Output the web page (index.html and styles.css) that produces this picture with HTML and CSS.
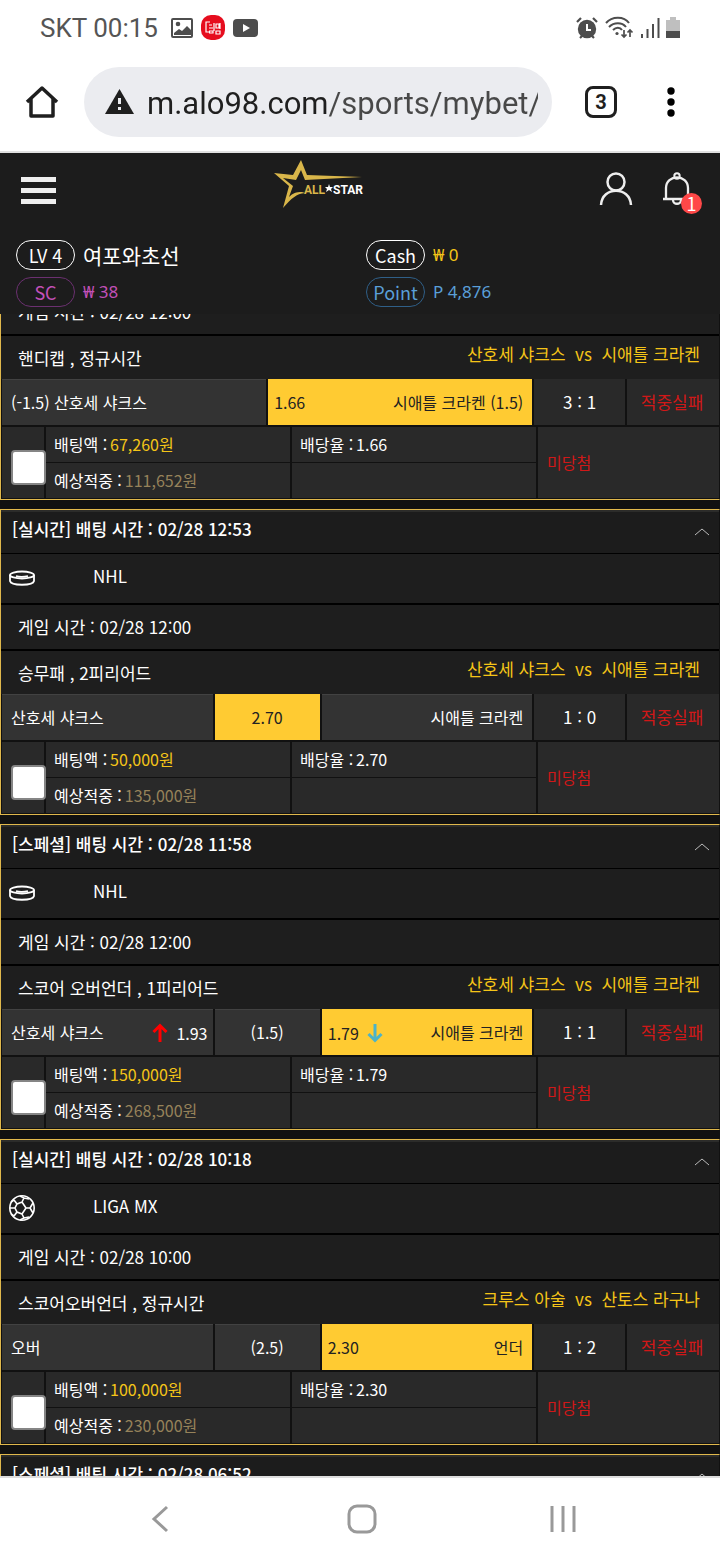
FILE: index.html
```html
<!DOCTYPE html>
<html lang="ko">
<head>
  <meta charset="UTF-8">
  <meta name="viewport" content="width=device-width, initial-scale=1.0">
  <title>ALL STAR</title>
  <link rel="stylesheet" href="styles.css">
</head>
<body>
  <div class="status-bar">
    <span class="carrier">SKT 00:15</span>
    <svg width="22" height="20" viewBox="0 0 22 20"><rect x="1" y="1" width="20" height="18" rx="1" fill="none" stroke="#4d4d4d" stroke-width="2"/><circle cx="7" cy="6" r="2.3" fill="#4d4d4d"/><path d="M3 15l5-4 3 2 5-5 4 4v5H3z" fill="#4d4d4d"/></svg>
    <svg width="24" height="26" viewBox="0 0 24 26"><rect width="24" height="25" rx="10" fill="#e60d1e"/><path d="M9 7H5v10h4M8 10h3M8 13h4M8 16h4v2H8M13 8v8M15 9v4h3V9zM19 8v6M15 16h4v3h-4z" fill="none" stroke="#fff" stroke-width="1.2"/></svg>
    <svg width="26" height="20" viewBox="0 0 26 20"><rect y="1" width="25" height="18" rx="4" fill="#4d4d4d"/><path d="M10 6v8l7-4z" fill="#fff"/></svg>
    <div class="status-right">
      <svg width="24" height="24" viewBox="0 0 24 24"><circle cx="12" cy="13" r="9.2" fill="#4d4d4d"/><path d="M2 6l4-4M22 6l-4-4M5 22l3-3M19 22l-3-3" stroke="#4d4d4d" stroke-width="2.2"/><path d="M12 8v6h4" fill="none" stroke="#fff" stroke-width="2"/></svg>
      <svg width="29" height="24" viewBox="0 0 29 24"><path d="M1 7c6-7 18-7 23 0M4 11c5-5 13-5 17 0M8 14c3-3 7-3 9 0" fill="none" stroke="#4d4d4d" stroke-width="2"/><circle cx="12" cy="17.500" r="1.600" fill="#4d4d4d"/><path d="M19 14v7M16.500 18.500L19 21l2.500-2.500M25 21v-7M22.500 16.500L25 14l2.500 2.500" fill="none" stroke="#4d4d4d" stroke-width="1.700"/></svg>
      <svg width="20" height="22" viewBox="0 0 20 22"><path d="M2 17v4M7.500 12v9M13 7v14M18.500 1v20" stroke="#4d4d4d" stroke-width="2"/></svg>
      <svg width="14" height="22" viewBox="0 0 14 22"><path d="M4 0h6v3h4v12H0V3h4z" fill="#bfbfbf"/><path d="M0 14h14v7H0z" fill="#4d4d4d"/></svg>
    </div>
  </div>

  <div class="browser-bar">
    <button class="icon-btn" aria-label="홈"><svg width="34" height="34" viewBox="0 0 34 34"><path d="M2 17L17 3l15 14M6 14v17h22V14" fill="none" stroke="#1f1f1f" stroke-width="3.500" stroke-linejoin="round"/></svg></button>
    <div class="address">
      <svg width="29" height="26" viewBox="0 0 29 26"><path d="M14.500 0L29 25H0z" fill="#1f1f1f"/><path d="M14.500 9v6M14.500 18v3" stroke="#ebecf0" stroke-width="3"/></svg>
      <input class="url" type="text" value="m.alo98.com/sports/mybet/" aria-label="주소">
    </div>
    <button class="tab-count">3</button>
    <button class="icon-btn" aria-label="메뉴"><svg width="8" height="30" viewBox="0 0 8 30"><circle cx="4" cy="4" r="3.700"/><circle cx="4" cy="15" r="3.700"/><circle cx="4" cy="26" r="3.700"/></svg></button>
  </div>

  <header class="header">
    <div class="top">
      <button class="menu-btn" aria-label="전체 메뉴"><i></i><i></i><i></i></button>
      <a class="logo" href="#">
        <svg width="90" height="50" viewBox="0 0 90 50" role="img" aria-label="ALL STAR">
          <path fill-rule="evenodd" d="M0 13l19 2 8-15 6 15 55 2-57 3-4-10-5 10-13-2 10 8-4 11c4-4 7-5 13-5l3 1c-9 1-13 5-22 15l6-22z" fill="#d9b64a"/>
          <text class="logo-all" x="30" y="34">ALL</text>
          <path d="M55 24l1 3h3l-2 2 1 3-3-2-3 2 1-3-2-2h3z" fill="#fff"/>
          <text class="logo-star" x="59" y="34">STAR</text>
        </svg>
      </a>
      <div class="top-right">
        <button class="icon-btn" aria-label="내 정보"><svg width="34" height="34" viewBox="0 0 34 34"><circle cx="17" cy="10" r="8.500" fill="none" stroke="#eee" stroke-width="2.500"/><path d="M2 33c1-19 29-19 30 0" fill="none" stroke="#eee" stroke-width="2.500"/></svg></button>
        <button class="icon-btn bell" aria-label="알림"><svg width="28" height="34" viewBox="0 0 28 34"><path d="M0 27h28M3 27V16c0-14 22-14 22 0v11M10 28c0 5 8 5 8 0" fill="none" stroke="#eee" stroke-width="2.300"/><circle cx="14" cy="4" r="2.700" fill="none" stroke="#eee" stroke-width="2"/></svg><span class="count">1</span></button>
      </div>
    </div>
    <div class="member">
      <div class="info"><span class="badge">LV 4</span><span class="name">여포와초선</span></div>
      <div class="info cash"><span class="badge">Cash</span><span class="money">₩ 0</span></div>
      <div class="info sc"><span class="badge">SC</span><span class="money">₩ 38</span></div>
      <div class="info point"><span class="badge">Point</span><span class="money">P 4,876</span></div>
    </div>
  </header>

  <main class="content">
    <div class="bet-list">
      <section class="bet">
        <div class="time">게임 시간 : 02/28 12:00</div>
        <div class="type"><span>핸디캡 , 정규시간</span><span class="versus">산호세 샤크스&nbsp; vs &nbsp;시애틀 크라켄</span></div>
        <div class="odds">
          <div class="pick two">
            <div class="team"><span>(-1.5) 산호세 샤크스</span></div>
            <div class="team on"><span>1.66</span><span class="away">시애틀 크라켄 (1.5)</span></div>
          </div>
          <div class="score">3 : 1</div>
          <div class="result">적중실패</div>
        </div>
        <div class="summary">
          <div class="check"><input type="checkbox" aria-label="선택"></div>
          <dl><div><dt>배팅액 :</dt><dd class="stake">67,260원</dd></div><div><dt>예상적중 :</dt><dd class="expect">111,652원</dd></div></dl>
          <dl><div><dt>배당율 :</dt><dd>1.66</dd></div><div></div></dl>
          <div class="state">미당첨</div>
        </div>
      </section>

      <section class="bet">
        <h2 class="title">[실시간] 배팅 시간 : 02/28 12:53<button class="fold" aria-label="접기"><svg width="16" height="10" viewBox="0 0 16 10"><path d="M1 8l7-6 7 6" fill="none" stroke="#bbb"/></svg></button></h2>
        <div class="league"><svg width="28" height="28" viewBox="0 0 28 28" fill="none" stroke="#fff" stroke-width="1.800"><ellipse cx="14" cy="11" rx="12" ry="3.500"/><path d="M2 11v6c1 5 23 5 24 0v-6M8 12c3 1 8 1 12 0"/></svg><span>NHL</span></div>
        <div class="time">게임 시간 : 02/28 12:00</div>
        <div class="type"><span>승무패 , 2피리어드</span><span class="versus">산호세 샤크스&nbsp; vs &nbsp;시애틀 크라켄</span></div>
        <div class="odds">
          <div class="pick">
            <div class="team"><span>산호세 샤크스</span></div>
            <div class="line on">2.70</div>
            <div class="team"><span class="away">시애틀 크라켄</span></div>
          </div>
          <div class="score">1 : 0</div>
          <div class="result">적중실패</div>
        </div>
        <div class="summary">
          <div class="check"><input type="checkbox" aria-label="선택"></div>
          <dl><div><dt>배팅액 :</dt><dd class="stake">50,000원</dd></div><div><dt>예상적중 :</dt><dd class="expect">135,000원</dd></div></dl>
          <dl><div><dt>배당율 :</dt><dd>2.70</dd></div><div></div></dl>
          <div class="state">미당첨</div>
        </div>
      </section>

      <section class="bet">
        <h2 class="title">[스페셜] 배팅 시간 : 02/28 11:58<button class="fold" aria-label="접기"><svg width="16" height="10" viewBox="0 0 16 10"><path d="M1 8l7-6 7 6" fill="none" stroke="#bbb"/></svg></button></h2>
        <div class="league"><svg width="28" height="28" viewBox="0 0 28 28" fill="none" stroke="#fff" stroke-width="1.800"><ellipse cx="14" cy="11" rx="12" ry="3.500"/><path d="M2 11v6c1 5 23 5 24 0v-6M8 12c3 1 8 1 12 0"/></svg><span>NHL</span></div>
        <div class="time">게임 시간 : 02/28 12:00</div>
        <div class="type"><span>스코어 오버언더 , 1피리어드</span><span class="versus">산호세 샤크스&nbsp; vs &nbsp;시애틀 크라켄</span></div>
        <div class="odds">
          <div class="pick">
            <div class="team"><span>산호세 샤크스</span><span class="rate"><svg width="16" height="20" viewBox="0 0 16 20"><path d="M8 19V3M1.500 9L8 2.500 14.500 9" fill="none" stroke="#f00" stroke-width="3"/></svg>1.93</span></div>
            <div class="line">(1.5)</div>
            <div class="team on"><span class="rate">1.79<svg width="16" height="20" viewBox="0 0 16 20"><path d="M8 1v16M1.500 11L8 17.500l6.500-6.500" fill="none" stroke="#4db3c8" stroke-width="3"/></svg></span><span class="away">시애틀 크라켄</span></div>
          </div>
          <div class="score">1 : 1</div>
          <div class="result">적중실패</div>
        </div>
        <div class="summary">
          <div class="check"><input type="checkbox" aria-label="선택"></div>
          <dl><div><dt>배팅액 :</dt><dd class="stake">150,000원</dd></div><div><dt>예상적중 :</dt><dd class="expect">268,500원</dd></div></dl>
          <dl><div><dt>배당율 :</dt><dd>1.79</dd></div><div></div></dl>
          <div class="state">미당첨</div>
        </div>
      </section>

      <section class="bet">
        <h2 class="title">[실시간] 배팅 시간 : 02/28 10:18<button class="fold" aria-label="접기"><svg width="16" height="10" viewBox="0 0 16 10"><path d="M1 8l7-6 7 6" fill="none" stroke="#bbb"/></svg></button></h2>
        <div class="league"><svg width="28" height="28" viewBox="0 0 28 28" fill="none" stroke="#fff" stroke-width="1.600"><circle cx="14" cy="14" r="12.200"/><path d="M9 10l5-2 4 6-4 6-5-2-2-4zM18 14h4M14 8l2-4M14 20l2 4M7 14H2M9 10L6 6M9 18l-3 4M16 4l-4-2M16 4l5 1M16 24l-4 2M16 24l5-1M22 14l3-5M22 14l3 5M6 6l-3 2M6 22l-3-2"/></svg><span>LIGA MX</span></div>
        <div class="time">게임 시간 : 02/28 10:00</div>
        <div class="type"><span>스코어오버언더 , 정규시간</span><span class="versus">크루스 아술&nbsp; vs &nbsp;산토스 라구나</span></div>
        <div class="odds">
          <div class="pick">
            <div class="team"><span>오버</span></div>
            <div class="line">(2.5)</div>
            <div class="team on"><span>2.30</span><span class="away">언더</span></div>
          </div>
          <div class="score">1 : 2</div>
          <div class="result">적중실패</div>
        </div>
        <div class="summary">
          <div class="check"><input type="checkbox" aria-label="선택"></div>
          <dl><div><dt>배팅액 :</dt><dd class="stake">100,000원</dd></div><div><dt>예상적중 :</dt><dd class="expect">230,000원</dd></div></dl>
          <dl><div><dt>배당율 :</dt><dd>2.30</dd></div><div></div></dl>
          <div class="state">미당첨</div>
        </div>
      </section>

      <section class="bet">
        <h2 class="title">[스페셜] 배팅 시간 : 02/28 06:52<button class="fold" aria-label="접기"><svg width="16" height="10" viewBox="0 0 16 10"><path d="M1 8l7-6 7 6" fill="none" stroke="#bbb"/></svg></button></h2>
      </section>
    </div>
  </main>

  <nav class="system-nav">
    <button aria-label="뒤로"><svg width="30" height="30" viewBox="0 0 30 30"><path d="M21 3L8 15l13 12"/></svg></button>
    <button aria-label="홈 화면"><svg width="30" height="30" viewBox="0 0 30 30"><rect x="2" y="2" width="26" height="26" rx="8"/></svg></button>
    <button aria-label="최근 앱"><svg width="30" height="30" viewBox="0 0 30 30"><path d="M4 2v26M15 2v26M26 2v26"/></svg></button>
  </nav>
</body>
</html>
```
FILE: styles.css
```css
*{
  margin: 0;
  padding: 0;
  box-sizing: border-box;
}
body{
  display: flex;
  flex-direction: column;
  height: 100vh;
  background: #fff;
  color: #fff;
  font-family: "Noto Sans CJK KR", "Noto Sans", sans-serif;
  font-size: 17px;
  line-height: 24px;
}
button{
  border: 0;
  background: none;
  color: inherit;
  font: inherit;
}
svg{
  display: block;
  flex: none;
}

/* phone status bar */
.status-bar{
  display: flex;
  align-items: center;
  gap: 8px;
  height: 56px;
  padding: 0 40px;
  color: #555;
  font: 26px/56px Roboto, sans-serif;
}
.carrier{
  margin-right: 5px;
}
.status-right{
  display: flex;
  align-items: center;
  gap: 6px;
  margin-left: auto;
}

/* browser toolbar */
.browser-bar{
  display: flex;
  align-items: center;
  height: 97px;
  padding: 0 45px 3px 25px;
  border-bottom: 2px solid #e0e0e0;
}
.icon-btn{
  position: relative;
}
.address{
  display: flex;
  align-items: center;
  flex: 1;
  gap: 13px;
  min-width: 0;
  height: 70px;
  margin: 0 33px 0 25px;
  padding: 0 14px 0 21px;
  border-radius: 35px;
  background: #ebecf0;
}
.url{
  flex: 1;
  min-width: 0;
  padding-top: 3px;
  border: 0;
  outline: 0;
  color: transparent;
  background: linear-gradient(90deg, #1f1f1f 181px, #484848 181px);
  background-clip: text;
  -webkit-background-clip: text;
  font: 31px/40px Roboto, sans-serif;
}
.tab-count{
  flex: none;
  width: 32px;
  height: 32px;
  margin-right: 50px;
  border: 3px solid #1f1f1f;
  border-radius: 8px;
  color: #1f1f1f;
  font: bold 20px/26px Roboto, sans-serif;
}

/* site header */
.header{
  position: relative;
  height: 161px;
  background: #1c1c1c;
}
.top{
  display: grid;
  grid-template-columns: 253fr auto 328fr;
  align-items: center;
  height: 74px;
  padding: 0 29px 0 21px;
}
.menu-btn{
  display: flex;
  flex-direction: column;
  gap: 6px;
  width: 35px;
}
.menu-btn i{
  height: 5px;
  background: #eee;
}
.logo{
  padding: 0 0 10px;
}
.logo-all,
.logo-star{
  font: bold 12px Roboto, sans-serif;
  fill: #d9b64a;
}
.logo-star{
  fill: #fff;
}
.top-right{
  display: flex;
  justify-content: flex-end;
  gap: 30px;
  padding-bottom: 3px;
}
.count{
  position: absolute;
  right: -11px;
  bottom: -8px;
  width: 21px;
  height: 21px;
  border-radius: 50%;
  background: #ff4848;
  font-size: 18px;
  line-height: 21px;
  text-align: center;
}
.member{
  display: grid;
  grid-template-columns: 1fr 1fr;
  row-gap: 7px;
  padding: 13px 4px 0 16px;
}
.info{
  display: flex;
  align-items: center;
  gap: 8px;
}
.name{
  font-size: 21px;
}
.badge{
  width: 59px;
  height: 30px;
  border: 1px solid #fff;
  border-radius: 15px;
  font-size: 18px;
  line-height: 28px;
  text-align: center;
}
.money{
  font-family: "Noto Sans", "Noto Sans CJK KR", sans-serif;
}
.cash .money{
  color: #f5c518;
}
.sc{
  color: #c250b8;
}
.sc .badge{
  border-color: #6b3070;
}
.point{
  color: #5a9fd8;
}
.point .badge{
  border-color: #2f5f88;
}

/* bet history */
.content{
  flex: 1;
  min-height: 0;
  overflow: hidden;
  background: #111;
}
.bet-list{
  display: flex;
  flex-direction: column;
  gap: 9px;
  margin-top: -25px;
}
.bet{
  border: 1px solid #e0b84c;
  border-right-color: #111;
  background: #111;
}
.title{
  display: flex;
  justify-content: space-between;
  align-items: center;
  height: 44px;
  padding: 0 9px 7px 11px;
  border-top: 2px solid #2c2c2a;
  border-bottom: 1px solid #000;
  background: #1c1c1c;
  font-size: 17px;
  font-weight: 500;
}
.fold{
  padding-top: 6px;
}
.league{
  display: flex;
  align-items: center;
  gap: 57px;
  height: 51px;
  padding: 0 7px 2px;
  border-bottom: 2px solid #000;
  background: #1e1e1e;
}
.league span{
  padding-bottom: 3px;
}
.time{
  height: 46px;
  padding: 10px 17px;
  border-bottom: 2px solid #000;
  background: #1e1e1e;
}
.type{
  display: flex;
  justify-content: space-between;
  height: 43px;
  padding: 10px 19px 0 17px;
  background: #1e1e1e;
}
.versus{
  margin-top: -4px;
  color: #f5c518;
}
.odds{
  display: grid;
  grid-template-columns: 531fr 91fr 92fr;
  gap: 2px;
  height: 48px;
  padding: 0 0 2px 1px;
  font-size: 16px;
  line-height: 46px;
}
.pick{
  display: grid;
  grid-template-columns: 2fr 1fr 2fr;
  gap: 2px;
}
.two{
  grid-template-columns: 1fr 1fr;
}
.team{
  display: flex;
  padding: 0 5px 0 9px;
  border-top: 1px solid #424242;
  background: #333;
  line-height: 44px;
}
.team.on{
  padding-left: 6px;
}
.away{
  margin-left: auto;
  padding-right: 4px;
}
.rate{
  display: flex;
  align-items: center;
  gap: 8px;
}
.team .rate:last-child{
  margin-left: auto;
}
.line{
  border-top: 1px solid #424242;
  background: #333;
  line-height: 44px;
  text-align: center;
}
.on{
  border-color: #ffcb32;
  background: #ffcb32;
  color: #222;
}
.score,
.result{
  background: #292929;
  font-size: 17px;
  text-align: center;
}
.result,
.state{
  color: #d01818;
}
.result{
  padding-right: 2px;
}
.summary{
  display: grid;
  grid-template-columns: 42fr 244fr 244fr 181fr;
  gap: 2px;
  height: 72px;
  padding: 0 0 1px 1px;
  font-size: 16px;
}
.check{
  min-width: 0;
  padding: 23px 0 0 9px;
  background: #292929;
}
.check input{
  appearance: none;
  position: relative;
  display: block;
  width: 35px;
  height: 35px;
  border: 2px solid #858585;
  border-radius: 4px;
  background: #fff;
}
.summary dl{
  display: grid;
  grid-template-rows: 1fr 1fr;
  gap: 1px;
}
.summary dl div{
  display: flex;
  gap: 3px;
  padding: 0 8px;
  background: #292929;
  line-height: 35px;
}
.stake{
  color: #f5c518;
}
.expect{
  color: #96825a;
}
.state{
  padding-left: 9px;
  background: #292929;
  line-height: 71px;
}

/* phone navigation */
.system-nav{
  display: grid;
  grid-template-columns: repeat(3, 1fr);
  height: 84px;
  padding: 0 57px 0 60px;
  border-top: 2px solid #ddd;
}
.system-nav button{
  display: flex;
  justify-content: center;
  align-items: center;
}
.system-nav svg{
  fill: none;
  stroke: #999;
  stroke-width: 3;
}
```
